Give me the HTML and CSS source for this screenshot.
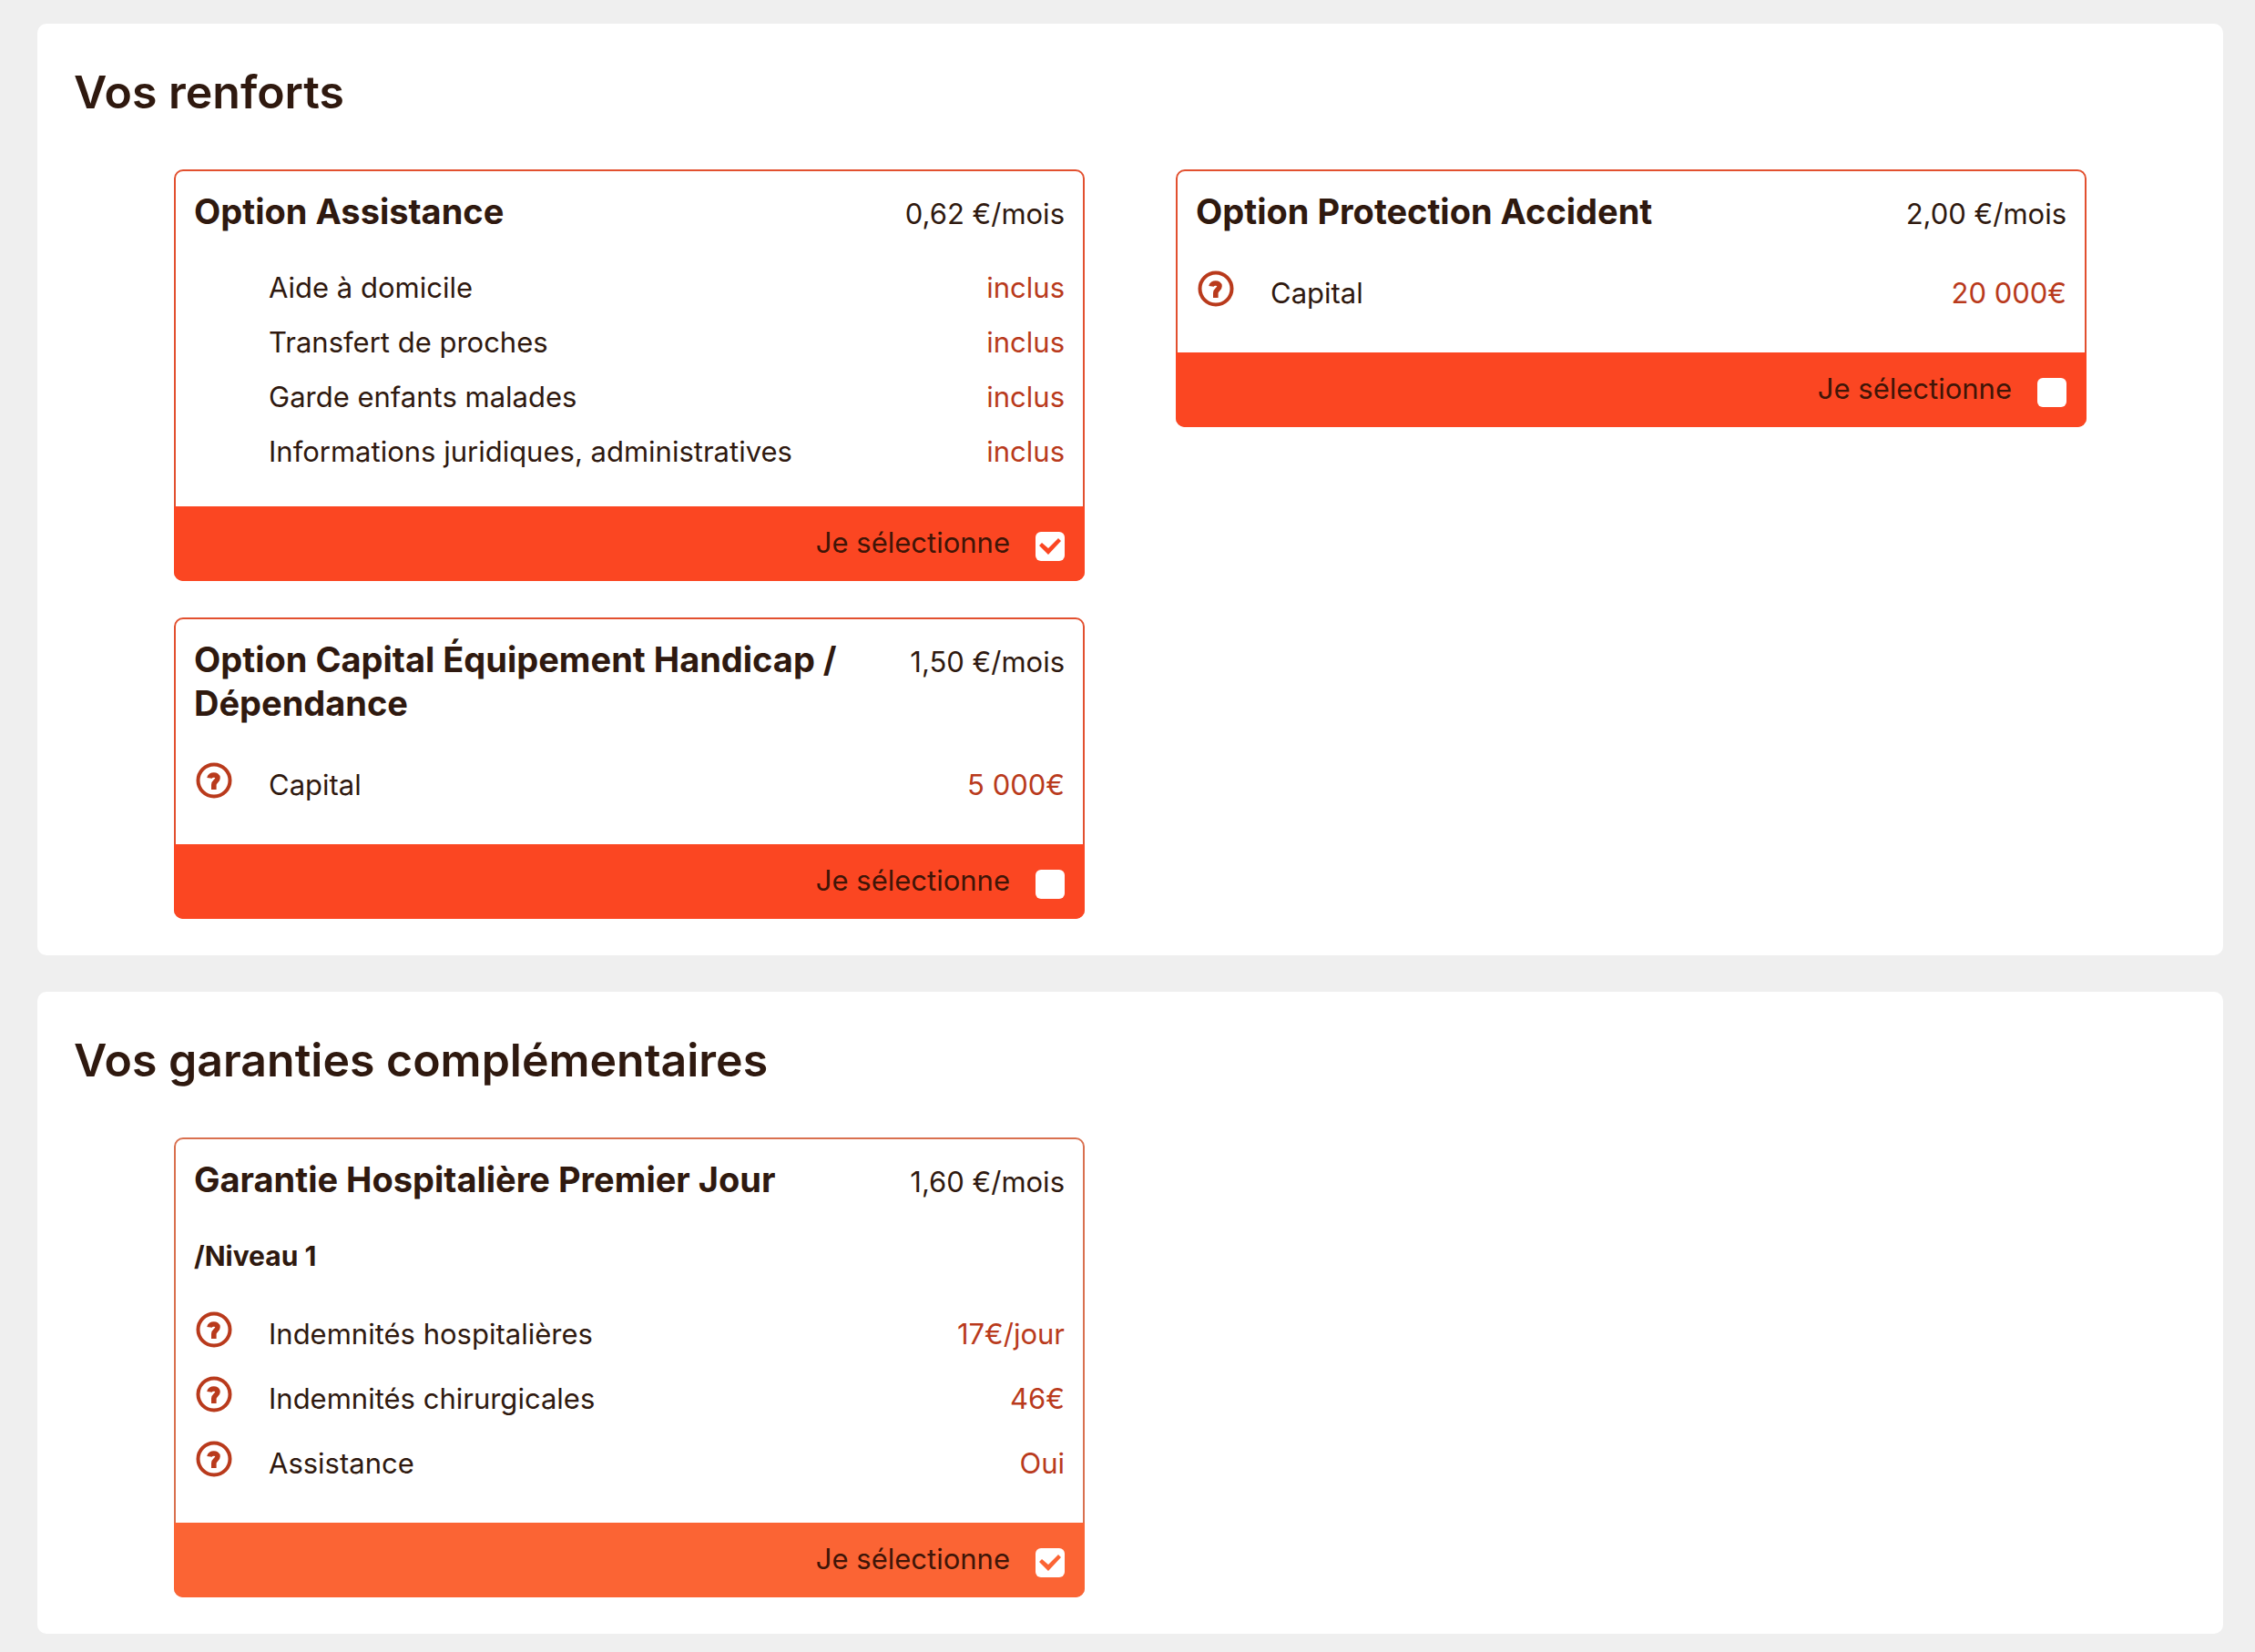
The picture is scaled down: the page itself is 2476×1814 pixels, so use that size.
FILE: index.html
```html
<!DOCTYPE html>
<html lang="fr">
<head>
    <meta charset="UTF-8">
    <meta name="viewport" content="width=device-width, initial-scale=1">
    <title>Vos renforts</title>
    <link rel="stylesheet" href="styles.css">
</head>
<body>
    <!-- question mark used by every help button -->
    <svg class="sprite" aria-hidden="true">
        <symbol id="icon-help" viewBox="0 0 44 44">
            <circle cx="22" cy="22" r="17.5" fill="none" stroke="currentColor" stroke-width="4"/>
            <path d="M17 19.4C17.6 14.9 26 14.8 26 19.3C26 23.2 21.8 22.8 21.8 27V32" fill="none" stroke="currentColor" stroke-width="5.6"/>
        </symbol>
    </svg>

    <section class="panel">
        <h2>Vos renforts</h2>
        <div class="columns">
            <div class="column">
                <article class="card">
                    <div class="card-header">
                        <h3>Option Assistance</h3>
                        <span class="price">0,62 €/mois</span>
                    </div>
                    <ul class="details">
                        <li><span class="name">Aide à domicile</span><span class="value">inclus</span></li>
                        <li><span class="name">Transfert de proches</span><span class="value">inclus</span></li>
                        <li><span class="name">Garde enfants malades</span><span class="value">inclus</span></li>
                        <li><span class="name">Informations juridiques, administratives</span><span class="value">inclus</span></li>
                    </ul>
                    <div class="card-footer">
                        <label for="assistance">Je sélectionne</label>
                        <input type="checkbox" id="assistance" checked>
                    </div>
                </article>

                <article class="card">
                    <div class="card-header">
                        <h3>Option Capital Équipement Handicap / Dépendance</h3>
                        <span class="price">1,50 €/mois</span>
                    </div>
                    <ul class="details">
                        <li>
                            <button type="button" class="help" aria-label="Aide"><svg><use href="#icon-help"/></svg></button>
                            <span class="name">Capital</span><span class="value">5 000€</span>
                        </li>
                    </ul>
                    <div class="card-footer">
                        <label for="handicap">Je sélectionne</label>
                        <input type="checkbox" id="handicap">
                    </div>
                </article>
            </div>

            <div class="column">
                <article class="card">
                    <div class="card-header">
                        <h3>Option Protection Accident</h3>
                        <span class="price">2,00 €/mois</span>
                    </div>
                    <ul class="details">
                        <li>
                            <button type="button" class="help" aria-label="Aide"><svg><use href="#icon-help"/></svg></button>
                            <span class="name">Capital</span><span class="value">20 000€</span>
                        </li>
                    </ul>
                    <div class="card-footer">
                        <label for="accident">Je sélectionne</label>
                        <input type="checkbox" id="accident">
                    </div>
                </article>
            </div>
        </div>
    </section>

    <section class="panel">
        <h2>Vos garanties complémentaires</h2>
        <div class="columns">
            <div class="column">
                <article class="card card-light">
                    <div class="card-header">
                        <h3>Garantie Hospitalière Premier Jour</h3>
                        <span class="price">1,60 €/mois</span>
                    </div>
                    <p class="level">/Niveau 1</p>
                    <ul class="details">
                        <li>
                            <button type="button" class="help" aria-label="Aide"><svg><use href="#icon-help"/></svg></button>
                            <span class="name">Indemnités hospitalières</span><span class="value">17€/jour</span>
                        </li>
                        <li>
                            <button type="button" class="help" aria-label="Aide"><svg><use href="#icon-help"/></svg></button>
                            <span class="name">Indemnités chirurgicales</span><span class="value">46€</span>
                        </li>
                        <li>
                            <button type="button" class="help" aria-label="Aide"><svg><use href="#icon-help"/></svg></button>
                            <span class="name">Assistance</span><span class="value">Oui</span>
                        </li>
                    </ul>
                    <div class="card-footer">
                        <label for="hospitaliere">Je sélectionne</label>
                        <input type="checkbox" id="hospitaliere" checked>
                    </div>
                </article>
            </div>
        </div>
    </section>
</body>
</html>
```
FILE: styles.css
```css
* { box-sizing: border-box; }
body { margin: 0; padding: 26px 35px 20px 41px; background: #efefef; color: #2f190f; font-family: Inter, "Liberation Sans", sans-serif; font-size: 31px; line-height: 42px; }
h2, h3, p, ul { margin: 0; padding: 0; }
.sprite { display: none; }

.panel { background: #fff; border-radius: 10px; padding: 40px; }
.panel + .panel { margin-top: 40px; }
.panel h2 { font-size: 50px; font-weight: 600; line-height: 70px; margin-bottom: 50px; }

.columns { display: grid; grid-template-columns: 1fr 1fr; gap: 100px; padding: 0 110px; }
.column { display: flex; flex-direction: column; gap: 40px; }

.card { --main: #fb4622; --line: #e2502f; border: 2px solid var(--line); border-radius: 10px; padding: 20px 20px 0; }
.card-light { --main: #fb6434; --line: #d9704f; }
.card-header { display: flex; justify-content: space-between; align-items: baseline; gap: 40px; margin-bottom: 30px; }
.card-header h3 { font-size: 38px; font-weight: 700; line-height: 48px; }
.price { white-space: nowrap; }
.level { font-size: 30px; font-weight: 700; line-height: 60px; margin-bottom: 20px; }

.details { list-style: none; margin-bottom: 30px; }
.details li { display: grid; grid-template-columns: 44px 1fr auto; column-gap: 38px; align-items: center; padding: 9px 0; }
.name { grid-column: 2; }
.value { color: #b93a1c; white-space: nowrap; }
.help { width: 44px; height: 44px; margin: 0 0 9px; padding: 0; border: none; background: none; color: #b93a1c; cursor: pointer; }
.help svg { display: block; width: 44px; height: 44px; }

/* the footer covers the card border */
.card-footer { display: flex; justify-content: flex-end; align-items: center; gap: 28px; margin: 0 -22px -2px; padding: 20px 22px 22px; background: var(--main); color: #3f1507; border-radius: 0 0 10px 10px; }
.card-footer label { line-height: 40px; cursor: pointer; }
.card-footer input { appearance: none; width: 32px; height: 32px; margin: 8px 0 0; background: #fff; border-radius: 6px; cursor: pointer; }
.card-footer input:checked::before { content: ""; display: block; width: 32px; height: 32px; background: var(--main); clip-path: polygon(4px 15px, 7px 12px, 14px 18px, 25px 7px, 28px 10px, 14px 25px); }
```
